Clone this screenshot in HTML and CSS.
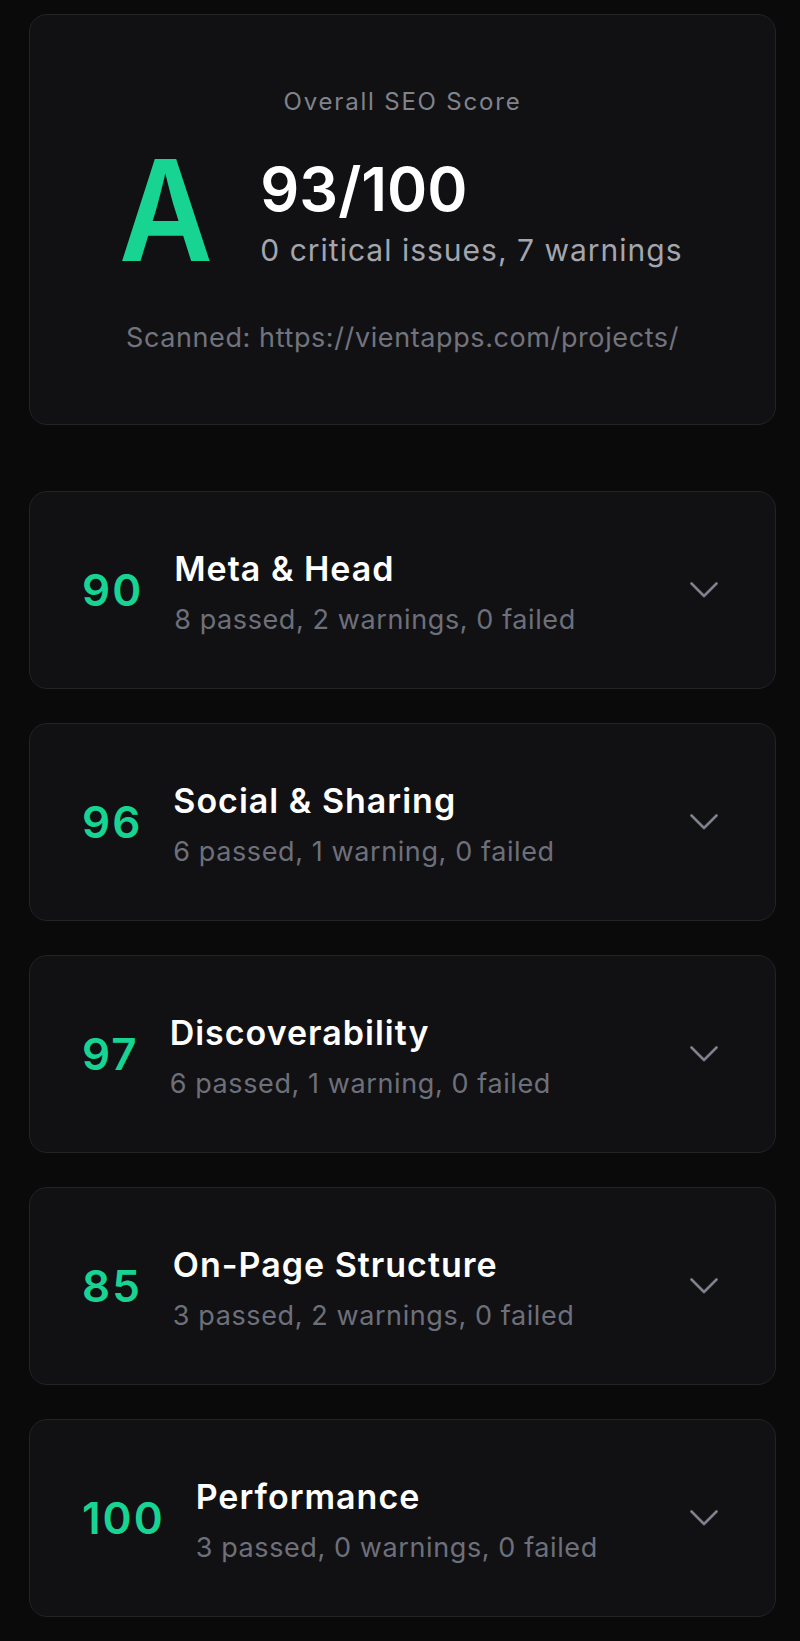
FILE: index.html
```html
<!DOCTYPE html>
<html lang="en">
<head>
    <meta charset="UTF-8">
    <meta name="viewport" content="width=device-width, initial-scale=1.0">
    <title>SEO Report</title>
    <link rel="stylesheet" href="styles.css">
</head>
<body>
    <div class="report">
        <!-- Overall score card -->
        <div class="overview">
            <p class="overview-label">Overall SEO Score</p>
            <div class="overview-row">
                <div class="grade">A</div>
                <div class="overview-text">
                    <div class="total">93/100</div>
                    <div class="issues">0 critical issues, 7 warnings</div>
                </div>
            </div>
            <p class="scanned">Scanned: https://vientapps.com/projects/</p>
        </div>

        <!-- Category cards -->
        <div class="category">
            <div class="cat-score">90</div>
            <div class="cat-info">
                <h3>Meta &amp; Head</h3>
                <p>8 passed, 2 warnings, 0 failed</p>
            </div>
            <svg class="chevron" width="28" height="16" viewBox="0 0 28 16"><polyline points="1.5,1.5 14,14 26.5,1.5"/></svg>
        </div>

        <div class="category">
            <div class="cat-score">96</div>
            <div class="cat-info">
                <h3>Social &amp; Sharing</h3>
                <p>6 passed, 1 warning, 0 failed</p>
            </div>
            <svg class="chevron" width="28" height="16" viewBox="0 0 28 16"><polyline points="1.5,1.5 14,14 26.5,1.5"/></svg>
        </div>

        <div class="category">
            <div class="cat-score">97</div>
            <div class="cat-info">
                <h3>Discoverability</h3>
                <p>6 passed, 1 warning, 0 failed</p>
            </div>
            <svg class="chevron" width="28" height="16" viewBox="0 0 28 16"><polyline points="1.5,1.5 14,14 26.5,1.5"/></svg>
        </div>

        <div class="category">
            <div class="cat-score">85</div>
            <div class="cat-info">
                <h3>On-Page Structure</h3>
                <p>3 passed, 2 warnings, 0 failed</p>
            </div>
            <svg class="chevron" width="28" height="16" viewBox="0 0 28 16"><polyline points="1.5,1.5 14,14 26.5,1.5"/></svg>
        </div>

        <div class="category">
            <div class="cat-score">100</div>
            <div class="cat-info">
                <h3>Performance</h3>
                <p>3 passed, 0 warnings, 0 failed</p>
            </div>
            <svg class="chevron" width="28" height="16" viewBox="0 0 28 16"><polyline points="1.5,1.5 14,14 26.5,1.5"/></svg>
        </div>
    </div>
</body>
</html>
```

FILE: styles.css
```css
body {
    font-family: "Inter", "Liberation Sans", sans-serif;
    margin: 0;
    padding: 0;
    background-color: #0a0a0b;
    color: #ffffff;
}

.report {
    padding: 14px 24px 26px 29px;
    display: flex;
    flex-direction: column;
    gap: 34px;
}

.overview,
.category {
    background-color: #111114;
    border: 1px solid #232328;
    border-radius: 18px;
    box-sizing: border-box;
}

.overview {
    padding: 72px 24px 70px;
    text-align: center;
    margin-bottom: 32px;
}

.overview-label {
    margin: 0;
    font-size: 24px;
    line-height: 30px;
    color: #80838c;
    letter-spacing: 1.8px;
}

.overview-row {
    display: flex;
    justify-content: center;
    align-items: center;
    gap: 43px;
    margin-top: 23px;
}

.grade {
    font-size: 140px;
    line-height: 1;
    font-weight: 600;
    color: #17d492; /* grade green */
    transform: scaleX(0.92);
}

.overview-text {
    text-align: left;
    display: flex;
    flex-direction: column;
    gap: 13px;
    padding: 6px 7px 0 0;
}

.total {
    font-size: 61px;
    line-height: 60px;
    font-weight: 600;
}

.issues {
    font-size: 30px;
    line-height: 36px;
    color: #a3a6ae;
    letter-spacing: 1px;
}

.scanned {
    margin: 42px 0 0;
    font-size: 27px;
    line-height: 32px;
    color: #71747d;
    letter-spacing: 0.6px;
}

.category {
    min-height: 198px;
    display: flex;
    align-items: center;
    padding: 0 57px 0 52px;
}

.cat-score {
    font-size: 44px;
    font-weight: 600;
    color: #17d492;
    letter-spacing: 2px;
    margin-right: 31px;
}

.cat-info {
    flex: 1;
    padding-top: 5px;
}

.cat-info h3 {
    margin: 0;
    font-size: 34px;
    line-height: 40px;
    font-weight: 600;
    letter-spacing: 1px;
}

.cat-info p {
    margin: 14px 0 0;
    font-size: 27px;
    line-height: 34px;
    color: #6d707a;
    letter-spacing: 0.6px;
}

.chevron {
    fill: none;
    stroke: #7e818b;
    stroke-width: 2.6;
    stroke-linecap: round;
    stroke-linejoin: round;
}
```
